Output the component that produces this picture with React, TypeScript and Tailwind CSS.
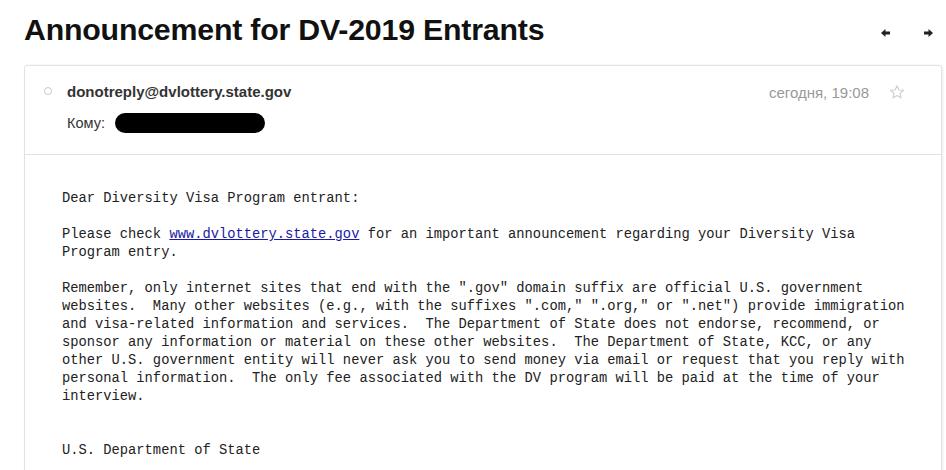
import React from "react";

const lines = [
  "Dear Diversity Visa Program entrant:",
  "",
  "__LINK__",
  "Program entry.",
  "",
  'Remember, only internet sites that end with the ".gov" domain suffix are official U.S. government',
  'websites.  Many other websites (e.g., with the suffixes ".com," ".org," or ".net") provide immigration',
  "and visa-related information and services.  The Department of State does not endorse, recommend, or",
  "sponsor any information or material on these other websites.  The Department of State, KCC, or any",
  "other U.S. government entity will never ask you to send money via email or request that you reply with",
  "personal information.  The only fee associated with the DV program will be paid at the time of your",
  "interview.",
  "",
  "",
  "U.S. Department of State",
];

export default function App() {
  return (
    <div className="w-[946px] h-[470px] overflow-hidden bg-white relative" style={{ fontFamily: '"Liberation Sans", Arial, sans-serif' }}>
      <div className="flex items-center justify-between pl-[24px] pr-[10px] h-[62px]">
        <h1 className="text-[30.3px] font-bold text-[#111] leading-none tracking-[-0.2px] pb-[1px]">Announcement for DV-2019 Entrants</h1>
        <div className="flex items-center gap-[30px] pr-[2px] pt-[3px]">
          <svg width="12" height="10" viewBox="0 0 12 10"><path d="M1 5 L5.5 1 L5.5 3.6 L10 3.6 L10 6.4 L5.5 6.4 L5.5 9 Z" fill="#222" /></svg>
          <svg width="12" height="10" viewBox="0 0 12 10"><path d="M11 5 L6.5 1 L6.5 3.6 L2 3.6 L2 6.4 L6.5 6.4 L6.5 9 Z" fill="#222" /></svg>
        </div>
      </div>
      <div className="ml-[24px] mt-[3px] w-[918px] border border-[#e2e2e2] rounded-t-[3px] shadow-[1px_0_3px_rgba(0,0,0,0.08)]">
        <div className="h-[89px] border-b border-[#e2e2e2] flex">
          <div className="w-[42px] flex justify-center pt-[21px]">
            <div className="w-[8px] h-[8px] rounded-full border border-[#c8c8c8] ml-[3px]" />
          </div>
          <div className="flex-1 pt-[16px]">
            <div className="text-[15px] font-bold text-[#333] leading-[20px]">donotreply@dvlottery.state.gov</div>
            <div className="flex items-center mt-[11px] text-[14.5px] text-[#333] leading-[20px]">
              <span>Кому:</span>
              <span className="ml-[10px] w-[150px] h-[20px] rounded-full bg-black inline-block" />
            </div>
          </div>
          <div className="flex pt-[17px] pr-[36px] gap-[20px]">
            <span className="text-[15px] text-[#999] leading-[20px]">сегодня, 19:08</span>
            <svg width="16" height="16" viewBox="0 0 24 24" className="mt-[1px]"><path d="M12 2.5 L14.8 9 L21.8 9.4 L16.4 14 L18.1 21 L12 17.2 L5.9 21 L7.6 14 L2.2 9.4 L9.2 9 Z" fill="none" stroke="#cfcfcf" strokeWidth="1.6" strokeLinejoin="round" /></svg>
          </div>
        </div>
        <div className="pl-[37px] pt-[35px] pb-[40px] text-[13.77px] leading-[18px] text-[#222]" style={{ fontFamily: '"Liberation Mono", "DejaVu Sans Mono", monospace' }}>
          {lines.map((l, i) =>
            l === "__LINK__" ? (
              <div key={i} className="h-[18px] whitespace-pre">
                <span>Please check </span>
                <a className="text-[#1a1aa6] underline" href="#">www.dvlottery.state.gov</a>
                <span> for an important announcement regarding your Diversity Visa</span>
              </div>
            ) : (
              <div key={i} className="h-[18px] whitespace-pre">{l}</div>
            )
          )}
        </div>
      </div>
    </div>
  );
}
